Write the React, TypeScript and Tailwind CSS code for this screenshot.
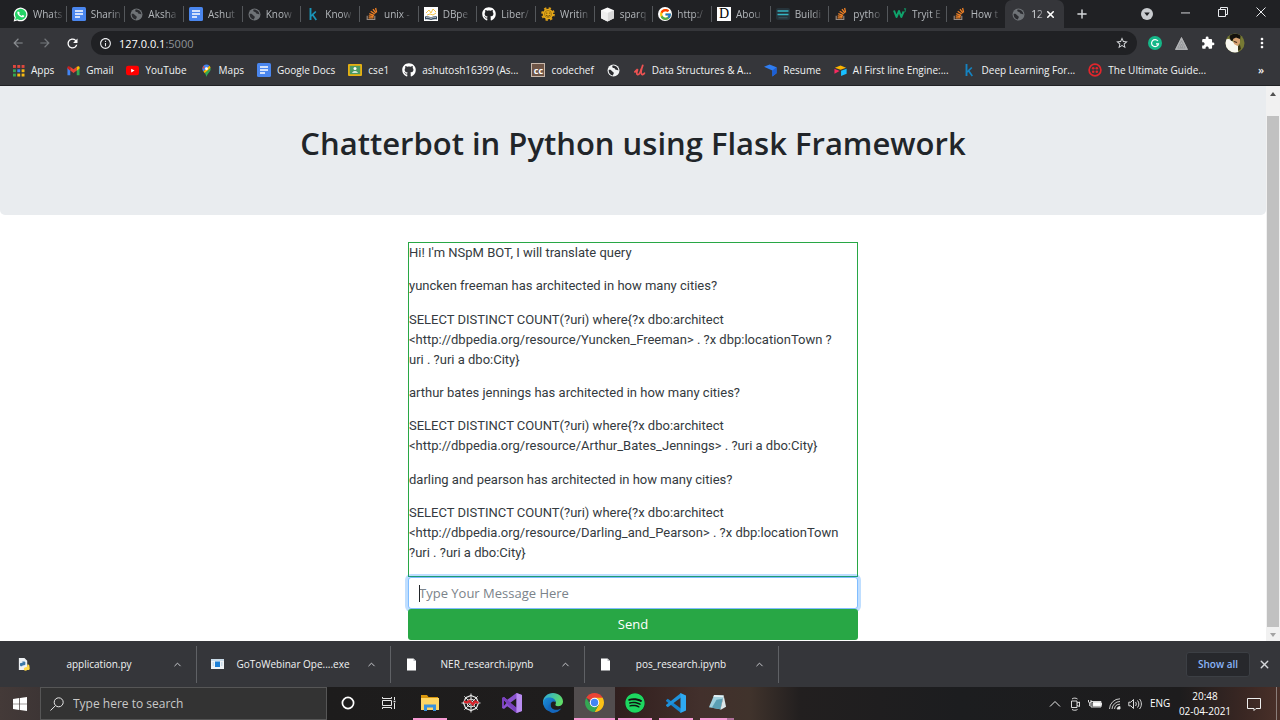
import React from 'react';
import {
  MdArrowBack,
  MdArrowForward,
  MdRefresh,
  MdInfoOutline,
  MdStarBorder,
  MdExtension,
  MdMoreVert,
} from 'react-icons/md';
import { FaGithub, FaSpotify } from 'react-icons/fa';
import { FcGoogle } from 'react-icons/fc';
import { ChevronUp, Plus, X } from 'lucide-react';

/* ---------- Site icons ---------- */

const WhatsApp = () => (
  <svg viewBox="0 0 24 24" className="size-[15px] shrink-0">
    <path d="M1 23l1.6-5.7A11 11 0 1 1 6.800 21.500z" fill="#fff" />
    <path d="M3.300 20.700l1.200-4.200A9 9 0 1 1 7.600 19.600z" fill="#25d366" />
    <path
      d="M8.300 6.800c-.3-.6-.5-.6-.9-.6-.8 0-1.700 1.100-1.700 2.500 0 1.600 1.200 3.100 1.300 3.300.2.200 2.300 3.600 5.700 4.900 2.800 1.100 3.400.9 4 .8.600 0 1.900-.8 2.200-1.500.3-.8.300-1.400.2-1.500-.1-.2-.3-.2-.6-.4l-2.100-1c-.3-.1-.5-.2-.8.2l-.9 1.200c-.2.200-.4.200-.7.100-.3-.2-1.400-.5-2.600-1.600-1-.9-1.600-1.900-1.800-2.200-.2-.3 0-.5.100-.7l.9-1c.1-.2.100-.4 0-.6z"
      fill="#fff"
      transform="translate(2.200 2) scale(.82)"
    />
  </svg>
);

const Docs = () => (
  <svg viewBox="0 0 14 14" className="size-[14px] shrink-0">
    <rect width="14" height="14" rx="1.500" fill="#4a86ee" />
    <path d="M3 4h8M3 7h8M3 10h5" stroke="#fff" strokeWidth="1.400" />
  </svg>
);

const Globe = ({ light = false }: { light?: boolean }) => (
  <svg viewBox="0 0 24 24" className="size-[13px] shrink-0">
    <circle cx="12" cy="12" r="11" fill={light ? '#f1f3f4' : '#6f7377'} />
    <path
      d="M3 11c3-1 5 .5 6.500 2.500 1 1.500 3 1 3 3.500 0 1.500-1.500 2-1.500 4C6 20.500 3 17 3 11zM10 3c-1 3 .5 4 3 4.500 2 .4 1 3 4 3 1.500 0 2.500 1 4 1.500C21 7 16 2.500 10 3z"
      fill="#2b2c30"
    />
  </svg>
);

const Kaggle = ({ color = '#1a94b8' }: { color?: string }) => (
  <svg viewBox="0 0 14 14" className="size-[14px] shrink-0" fill="none" stroke={color}>
    <path d="M4.500 1v12" strokeWidth="1.900" />
    <path d="M9.800 4.500L5 9.200M6.400 7.600L10.300 13" strokeWidth="1.700" />
  </svg>
);

const StackOverflow = () => (
  <svg viewBox="0 0 14 14" className="size-[14px] shrink-0" fill="none">
    <path d="M2.200 8.800v3.700h7.600V8.800" stroke="#9b8d84" strokeWidth="1.100" />
    <path
      d="M3.600 10.800h4.900M3.700 8.900l4.900.6M4.300 6.700l4.700 1.600M5.700 4.300l4.100 2.700M8 2.200l2.900 4M10.600 1l1 4.400"
      stroke="#f08125"
      strokeWidth="1.300"
    />
  </svg>
);

const DBpedia = () => (
  <svg viewBox="0 0 14 14" className="size-[14px] shrink-0">
    <rect width="14" height="14" fill="#fff" />
    <path d="M2 6l3-3 2 3 2-4 3 3M3 8l3-1 3 1 3-2" stroke="#f0bb35" strokeWidth=".9" fill="none" />
    <path d="M1 9.500c2-.6 4-.2 6 1 2-1.200 4-1.600 6-1v3c-2-.5-4-.2-6 .6-2-.8-4-1.100-6-.6z" fill="#34495e" />
    <path d="M2 10.500c2-.3 3.500 0 5 1 1.500-1 3-1.300 5-1" stroke="#fff" strokeWidth=".6" fill="none" />
  </svg>
);

const Github = () => <FaGithub className="size-[14px] shrink-0 text-white" />;

const Sun = () => (
  <svg viewBox="0 0 24 24" className="size-[14px] shrink-0">
    <circle cx="12" cy="12" r="10" fill="none" stroke="#dd9f17" strokeWidth="3.600" strokeDasharray="3.900 3.950" />
    <circle cx="12" cy="12" r="9" fill="#e9ac1a" />
    <circle cx="12" cy="12" r="6" fill="none" stroke="#8a630c" strokeWidth="1.200" />
    <path d="M8.500 10.500h2.500M13.500 10.500h2.500M8.500 13.500c2 3 5.500 3 7 0" stroke="#6b4b08" strokeWidth="1.600" fill="none" />
  </svg>
);

const Cube = () => (
  <svg viewBox="0 0 14 14" className="size-[15px] shrink-0">
    <path d="M7 .5l6 2.500v7.500L7 13.500l-6-3V3z" fill="#fafafa" />
    <path d="M7 5.500l6-2.500v7.500l-6 3z" fill="#d9d9d9" />
    <path d="M1 3l6 2.500v8l-6-3z" fill="#efefef" />
  </svg>
);

const Google = () => (
  <span className="flex size-[14px] shrink-0 items-center justify-center rounded-full bg-white">
    <FcGoogle className="size-[13px]" />
  </span>
);

const LetterD = () => (
  <span className="flex size-[14px] shrink-0 items-center justify-center bg-white font-['Liberation_Serif',serif] text-[14px] leading-none text-black">
    D
  </span>
);

const Bars = () => (
  <svg viewBox="0 0 14 14" className="size-[14px] shrink-0">
    <rect y="1" width="14" height="12" rx="2" fill="#26333a" />
    <path d="M1.500 4h11M1.500 7.500h11" stroke="#35b5c4" strokeWidth="1.500" />
    <path d="M2.500 10.800h9" stroke="#3c5961" />
  </svg>
);

const W3 = () => (
  <svg viewBox="0 0 14 14" className="size-[14px] shrink-0" fill="none" stroke="#0fa36b">
    <path d="M1 3.500l2.500 6.500 2.500-6 2.300 6 2.300-5.500" strokeWidth="2" strokeLinejoin="round" />
    <path d="M11 1.800h1.800l-1 1.300c1 .1 1.300 1.700-.6 1.700" strokeWidth=".9" />
  </svg>
);

const Apps = () => (
  <svg viewBox="0 0 13 13" className="size-[13px] shrink-0">
    {['#e0483e', '#e0483e', '#e0483e', '#34a853', '#4285f4', '#f5b912', '#34a853', '#f5b912', '#f5b912'].map(
      (c, i) => (
        <rect key={i} x={1 + (i % 3) * 4.3} y={1 + Math.floor(i / 3) * 4.3} width="2.900" height="2.900" fill={c} />
      ),
    )}
  </svg>
);

const Gmail = () => (
  <svg viewBox="0 0 14 14" className="size-[13px] shrink-0">
    <path d="M.5 4v8h3V6z" fill="#4285f4" />
    <path d="M13.500 4v8h-3V6z" fill="#34a853" />
    <path d="M3.500 3v4L7 9.600 10.500 7V3L7 5.600z" fill="#ea4335" />
    <path d="M.5 3.500v1.400l3 2.300V3C2 1.800.5 2.300.5 3.500z" fill="#c5221f" />
    <path d="M13.500 3.500v1.400l-3 2.300V3c1.500-1.200 3-.7 3 .5z" fill="#fbbc04" />
  </svg>
);

const YouTube = () => (
  <svg viewBox="0 0 14 14" className="size-[13px] shrink-0">
    <rect x="0" y="1.800" width="14" height="10.400" rx="2.400" fill="#f00" />
    <path d="M5.600 5v4.200L9.200 7.100z" fill="#fff" />
  </svg>
);

const Maps = () => (
  <svg viewBox="0 0 14 14" className="size-[13px] shrink-0">
    <path d="M7 .5a4.500 4.500 0 0 0-4.500 4.500c0 1.200.5 2.200 1.200 3.100L10.200 1.800A4.500 4.500 0 0 0 7 .5z" fill="#4285f4" />
    <path d="M3.600 2L2.700 6 5.200 3.500z" fill="#ea4335" />
    <path d="M10.200 1.800L3.700 8.100l1.500 1.900L11.400 4.200a4.500 4.500 0 0 0-1.200-2.400z" fill="#fbbc04" />
    <path d="M11.400 4.200L5.200 10c.9 1.200 1.300 2 1.500 3.200.1.400.5.400.6 0 .5-3.200 4.200-4.700 4.200-8.200z" fill="#34a853" />
    <circle cx="7" cy="5" r="1.600" fill="#fff" />
  </svg>
);

const Classroom = () => (
  <svg viewBox="0 0 14 14" className="size-[14px] shrink-0">
    <rect y="1" width="14" height="12" rx="1" fill="#e6b012" />
    <rect x="1.800" y="2.800" width="10.400" height="8.400" fill="#4c9a62" />
    <circle cx="7" cy="5.600" r="1.500" fill="#fff" />
    <path d="M4 9.800c.5-2.200 5.500-2.200 6 0z" fill="#fff" />
  </svg>
);

const CodeChef = () => (
  <span className="flex size-[14px] shrink-0 items-center justify-center border border-[#c9b8ab] bg-[#6f5546] text-[9px] leading-none font-bold text-white">
    cc
  </span>
);

const Udemy = () => (
  <svg viewBox="0 0 14 14" className="size-[13px] shrink-0" fill="none" stroke="#ec5252" strokeLinecap="round">
    <path d="M2 8.500L5 5.500c-1 3-1.600 5.500 0 6 1.600.3 3-2.500 4-6" strokeWidth="1.900" />
    <path d="M10.500 1.500c-1.500 4-2.500 8-1.200 9.500.8.800 2 .2 3-1" strokeWidth="1.900" />
  </svg>
);

const ResumeMark = () => (
  <svg viewBox="0 0 14 14" className="size-[13px] shrink-0">
    <path d="M0 3l6-2.500 7.500 3V10L9 13.500V7z" fill="#2f7df0" />
    <path d="M13.500 3.500V10L9 13.500V7z" fill="#1c5fd6" />
  </svg>
);

const Airtable = () => (
  <svg viewBox="0 0 14 14" className="size-[13px] shrink-0">
    <path d="M1 4l6-2.500L13 4 7 6.300z" fill="#fcb400" />
    <path d="M7.600 7.300l6-2.300v5.500l-6 2.300z" fill="#18bfff" />
    <path d="M.5 5l5.500 2.500L.5 10.500z" fill="#f82b60" />
  </svg>
);

const Twilio = () => (
  <svg viewBox="0 0 14 14" className="size-[14px] shrink-0">
    <circle cx="7" cy="7" r="5.900" fill="none" stroke="#e0262c" strokeWidth="1.700" />
    <g fill="#e0262c">
      <circle cx="5.200" cy="5.200" r="1.300" />
      <circle cx="8.800" cy="5.200" r="1.300" />
      <circle cx="5.200" cy="8.800" r="1.300" />
      <circle cx="8.800" cy="8.800" r="1.300" />
    </g>
  </svg>
);

/* ---------- Browser chrome ---------- */

const tabs: { label: string; icon: React.ReactNode }[] = [
  { label: 'Whats', icon: <WhatsApp /> },
  { label: 'Sharin', icon: <Docs /> },
  { label: 'Aksha', icon: <Globe /> },
  { label: 'Ashut', icon: <Docs /> },
  { label: 'Know', icon: <Globe /> },
  { label: 'Know', icon: <Kaggle /> },
  { label: 'unix -', icon: <StackOverflow /> },
  { label: 'DBpe', icon: <DBpedia /> },
  { label: 'Liber/', icon: <Github /> },
  { label: 'Writin', icon: <Sun /> },
  { label: 'sparq', icon: <Cube /> },
  { label: 'http:/', icon: <Google /> },
  { label: 'Abou', icon: <LetterD /> },
  { label: 'Buildi', icon: <Bars /> },
  { label: 'pytho', icon: <StackOverflow /> },
  { label: 'Tryit E', icon: <W3 /> },
  { label: 'How t', icon: <StackOverflow /> },
];

function TabStrip() {
  return (
    <div className="flex h-7 bg-[#202124] pl-2">
      <div className="grid flex-1 grid-cols-18" role="tablist">
        {tabs.map((t, i) => (
          <button
            key={i}
            role="tab"
            aria-selected={false}
            className="flex min-w-0 items-center justify-between pl-[5px] text-[10px] text-[#b4b8bc]"
          >
            <span className="flex items-center gap-[5px]">
              {t.icon}
              <span className="whitespace-nowrap [mask-image:linear-gradient(to_right,#000_65%,rgba(0,0,0,0.25))]">
                {t.label}
              </span>
            </span>
            <span className={i === 16 ? 'h-4 w-px' : 'h-4 w-px bg-[#54575b]'} />
          </button>
        ))}
        <div className="flex min-w-0 items-center justify-between rounded-t-[7px] bg-[#35363a] pr-2 pl-[7px]">
          <button
            role="tab"
            aria-selected={true}
            className="flex items-center gap-[6px] text-[10px] text-[#dfe1e5]"
          >
            <Globe />
            <span className="[mask-image:linear-gradient(to_right,#000_50%,rgba(0,0,0,0.4))]">12</span>
          </button>
          <button aria-label="Close tab" className="text-white">
            <X className="size-[11px]" strokeWidth={3.5} />
          </button>
        </div>
      </div>
      <div className="flex w-[216px] items-center">
        <button aria-label="New tab" className="pl-[11px] text-[#d5d7da]">
          <Plus className="size-[14px]" strokeWidth={2.5} />
        </button>
        <div className="ml-auto flex items-center text-[#e8eaed]">
          <button aria-label="Search tabs" className="flex w-[38px] justify-center">
            <svg viewBox="0 0 12 12" className="size-3">
              <circle cx="6" cy="6" r="6" fill="#c9ccd0" />
              <path d="M3.200 4.600h5.600L6 8z" fill="#202124" />
            </svg>
          </button>
          <button aria-label="Minimize" className="-mt-1 flex w-[38px] justify-center">
            <svg viewBox="0 0 10 10" className="size-[9px]">
              <path d="M0 5.500h10" stroke="currentColor" />
            </svg>
          </button>
          <button aria-label="Restore" className="-mt-1 flex w-[38px] justify-center">
            <svg viewBox="0 0 10 10" className="size-[10px]" fill="none" stroke="currentColor">
              <path d="M.5 2.500h7v7h-7zM2.500 2.500v-2h7v7h-2" />
            </svg>
          </button>
          <button aria-label="Close window" className="-mt-1 flex w-[38px] justify-center">
            <svg viewBox="0 0 10 10" className="size-[10px]" stroke="currentColor">
              <path d="M.5 .5l9 9M9.500 .5l-9 9" />
            </svg>
          </button>
        </div>
      </div>
    </div>
  );
}

function Toolbar() {
  return (
    <div className="flex h-[30px] items-center px-[11px]">
      <div className="flex items-center gap-[13px] pr-[11px]">
        <button aria-label="Back" className="text-[#8a8d91]">
          <MdArrowBack className="size-[14px]" />
        </button>
        <button aria-label="Forward" className="text-[#75787c]">
          <MdArrowForward className="size-[14px]" />
        </button>
        <button aria-label="Reload" className="text-white">
          <MdRefresh className="size-[15px]" />
        </button>
      </div>
      <div className="flex h-6 flex-1 items-center gap-[7px] rounded-full bg-[#202124] px-2">
        <MdInfoOutline className="size-[13px] shrink-0 text-[#e8eaed]" />
        <a href="#address" className="text-[11px] leading-none text-white">
          127.0.0.1<span className="text-[#8f9398]">:5000</span>
        </a>
        <button aria-label="Bookmark this page" className="ml-auto text-[#d5d7da]">
          <MdStarBorder className="size-[14px]" />
        </button>
      </div>
      <div className="flex items-center gap-[13px] pl-[11px]">
        <button aria-label="Grammarly">
          <svg viewBox="0 0 14 14" className="size-[14px]">
            <circle cx="7" cy="7" r="7" fill="#15b788" />
            <path d="M9.900 5A3.500 3.500 0 1 0 10.500 7.800H8" fill="none" stroke="#fff" strokeWidth="1.200" />
          </svg>
        </button>
        <button aria-label="Extension">
          <svg viewBox="0 0 14 14" className="size-[13px]">
            <path d="M7 .5l6.500 13H.5z" fill="#b4b6b8" stroke="#b4b6b8" strokeLinejoin="round" />
            <path d="M7 4l4 8H3zM7 7.500l1.600 3.500H5.400z" fill="none" stroke="#808285" strokeWidth=".6" />
          </svg>
        </button>
        <button aria-label="Extensions" className="text-white">
          <MdExtension className="size-[14px]" />
        </button>
        <button aria-label="Profile" className="-mx-[3px]">
          <svg viewBox="0 0 20 20" className="size-5">
            <clipPath id="avatar">
              <circle cx="10" cy="10" r="9.500" />
            </clipPath>
            <g clipPath="url(#avatar)">
              <rect width="20" height="20" fill="#777a34" />
              <path d="M0 7c3-2 6-1 8 2l6 4-1 7H0z" fill="#f8f7f0" />
              <path d="M4.500 4C5 0 14 0 15.500 3l-.5 5-3-2-3 1-3 1z" fill="#14110d" />
              <path d="M8 6l3-1.500 4 1.500v4l-2.500 3L9 11z" fill="#d8a272" />
              <path d="M9 8.500l3 1" stroke="#3d2619" strokeWidth="1.100" />
              <path d="M13 13l2-1 1 4-3 2z" fill="#3a3418" />
            </g>
          </svg>
        </button>
        <button aria-label="Menu" className="-mx-px text-white">
          <MdMoreVert className="size-[16px]" />
        </button>
      </div>
    </div>
  );
}

const bookmarks: { label: string; icon: React.ReactNode }[] = [
  { label: 'Apps', icon: <Apps /> },
  { label: 'Gmail', icon: <Gmail /> },
  { label: 'YouTube', icon: <YouTube /> },
  { label: 'Maps', icon: <Maps /> },
  { label: 'Google Docs', icon: <Docs /> },
  { label: 'cse1', icon: <Classroom /> },
  { label: 'ashutosh16399 (As...', icon: <Github /> },
  { label: 'codechef', icon: <CodeChef /> },
  { label: '', icon: <Globe light /> },
  { label: 'Data Structures & A...', icon: <Udemy /> },
  { label: 'Resume', icon: <ResumeMark /> },
  { label: 'AI First line Engine:...', icon: <Airtable /> },
  { label: 'Deep Learning For...', icon: <Kaggle color="#1583c0" /> },
  { label: 'The Ultimate Guide...', icon: <Twilio /> },
];

function BookmarkBar() {
  return (
    <nav className="flex h-7 items-center gap-[13px] border-b border-[#202124] pr-4 pb-[3px] pl-3 text-[10px] whitespace-nowrap text-[#f1f3f4]">
      {bookmarks.map((b, i) => (
        <a key={i} href="#bookmark" aria-label={b.label || 'Bookmark'} className="flex items-center gap-[6px]">
          {b.icon}
          {b.label && <span>{b.label}</span>}
        </a>
      ))}
      <button aria-label="More bookmarks" className="ml-auto text-[11px] font-semibold">
        »
      </button>
    </nav>
  );
}

/* ---------- Page ---------- */

const messages: string[][] = [
  ["Hi! I'm NSpM BOT, I will translate query"],
  ['yuncken freeman has architected in how many cities?'],
  [
    'SELECT DISTINCT COUNT(?uri) where{?x dbo:architect',
    '<http://dbpedia.org/resource/Yuncken_Freeman> . ?x dbp:locationTown ?',
    'uri . ?uri a dbo:City}',
  ],
  ['arthur bates jennings has architected in how many cities?'],
  [
    'SELECT DISTINCT COUNT(?uri) where{?x dbo:architect',
    '<http://dbpedia.org/resource/Arthur_Bates_Jennings> . ?uri a dbo:City}',
  ],
  ['darling and pearson has architected in how many cities?'],
  [
    'SELECT DISTINCT COUNT(?uri) where{?x dbo:architect',
    '<http://dbpedia.org/resource/Darling_and_Pearson> . ?x dbp:locationTown',
    '?uri . ?uri a dbo:City}',
  ],
];

function ChatPage() {
  return (
    <div className="flex flex-1 bg-white">
      <main className="flex flex-1 flex-col items-center pb-px text-[#212529]">
        <header className="mb-[27px] flex w-full justify-center rounded-b-[5px] bg-[#e9ecef] pt-[37px] pb-[52px]">
          <h1 className="text-[31px] leading-10 font-semibold">Chatterbot in Python using Flask Framework</h1>
        </header>
        <section className="w-[450px] text-[13px]">
          <div className="flex min-h-[335px] flex-col justify-between border border-[#28a745] pb-[13px] font-['Roboto',sans-serif] leading-5 whitespace-pre">
            {messages.map((m, i) => (
              <p key={i} className="text-[#343a40]">
                {m.join('\n')}
              </p>
            ))}
          </div>
          <form onSubmit={(e) => e.preventDefault()}>
            <div className="relative">
              <input
                type="text"
                aria-label="Message"
                placeholder="Type Your Message Here"
                className="block h-8 w-full rounded-[3px] border border-[#80bdff] bg-white px-[10px] shadow-[0_0_0_3px_rgba(0,123,255,0.25)] outline-none placeholder:text-[#7b838a]"
              />
              <span className="absolute top-2 left-[11px] h-[17px] w-px bg-[#212529]" />
            </div>
            <button type="submit" className="relative block h-[31px] w-full rounded-[3px] bg-[#28a745] text-white">
              Send
            </button>
          </form>
        </section>
      </main>
      <div className="flex w-[14px] flex-col items-center gap-5 bg-[#f1f1f1] pt-[6px] pb-[4px]">
        <svg viewBox="0 0 6 4" className="h-1 w-[6px]">
          <path d="M3 0l3 4H0z" fill="#505050" />
        </svg>
        <div className="w-3 flex-1 bg-[#c1c1c1]" />
        <svg viewBox="0 0 6 4" className="-mt-[14px] h-1 w-[6px]">
          <path d="M3 4L0 0h6z" fill="#a3a3a3" />
        </svg>
      </div>
    </div>
  );
}

/* ---------- Downloads ---------- */

const PythonFile = () => (
  <svg viewBox="0 0 14 14" className="size-[13px] shrink-0">
    <path d="M2 0h6l3 3v10H2z" fill="#eef1f4" />
    <path d="M5 4.500c0-1 4-1.200 4 0V7c0 1-3.500.5-3.500 2H4c-1.200-.5-1-3.500 0-3.500h3" fill="#3b77a8" />
    <path d="M13 9.500C14 9.500 14 13 12.500 13H11c-1 1.200-3 1-3.500 0v-2c0-1.500 3.500-.5 3.500-2.500V7c2 0 2.500.5 2.500 2.500z" fill="#ffd94b" />
  </svg>
);

const ExeFile = () => (
  <svg viewBox="0 0 13 10" className="h-[10px] w-[13px] shrink-0">
    <rect width="13" height="10" fill="#eef2f5" />
    <rect x="4" y="2.500" width="5" height="5.500" fill="#1c7fd6" />
    <path d="M0 1h13M1.500 4h1.500M1.500 6h1.500M10 4h1.500M10 6h1.500" stroke="#8fb8d6" strokeWidth=".8" />
  </svg>
);

const BlankFile = () => (
  <svg viewBox="0 0 10 13" className="h-[13px] w-[13px] shrink-0">
    <path d="M.5 .5h6.500l2.500 2.500v9.500h-9z" fill="#fff" />
    <path d="M7 .5V3h2.500z" fill="#b9bcc0" />
  </svg>
);

const downloads = [
  { name: 'application.py', icon: <PythonFile /> },
  { name: 'GoToWebinar Ope....exe', icon: <ExeFile /> },
  { name: 'NER_research.ipynb', icon: <BlankFile /> },
  { name: 'pos_research.ipynb', icon: <BlankFile /> },
];

function DownloadShelf() {
  return (
    <div className="flex h-[46px] items-center bg-[#35363a] pr-[9px] pl-[3px]">
      {downloads.map((d) => (
        <div key={d.name} className="flex h-[37px] w-[194px] items-center border-r border-[#5f6165] pr-[13px] pl-[14px]">
          {d.icon}
          <a href="#download" className="flex-1 pr-1 text-center text-[10px] font-medium whitespace-nowrap text-[#f1f3f4]">
            {d.name}
          </a>
          <button aria-label={'Options for ' + d.name} className="text-[#d5d7da]">
            <ChevronUp className="size-[11px]" />
          </button>
        </div>
      ))}
      <button className="ml-auto h-[25px] w-16 rounded-[3px] border border-[#3c3f44] bg-[#27282c] text-[10px] font-semibold text-[#8ab4f8]">
        Show all
      </button>
      <button aria-label="Close downloads" className="ml-2 text-[#d5d7da]">
        <X className="size-[13px]" strokeWidth={2.5} />
      </button>
    </div>
  );
}

/* ---------- Taskbar ---------- */

const Cortana = () => (
  <svg viewBox="0 0 14 14" className="size-[14px]">
    <circle cx="7" cy="7" r="5.600" fill="none" stroke="#fff" strokeWidth="1.700" />
  </svg>
);

const TaskView = () => (
  <svg viewBox="0 0 14 14" className="size-[14px]" fill="none" stroke="#e6e6e6">
    <path d="M.5 4.500h9v5h-9zM.5 1v1.500h9V1M.5 13v-1.500h9V13M12.500 1v3M12.500 7v6" />
    <path d="M11.500 5.500h2" strokeWidth="1.500" />
  </svg>
);

const Explorer = () => (
  <svg viewBox="0 0 20 18" className="h-[18px] w-5">
    <path d="M1 1h6l1.500 2H18v3H1z" fill="#d9970d" />
    <path d="M1 4h18v12H1z" fill="#ffd765" />
    <path d="M4 17v-6.500h12V17h-3v-3.500H7V17z" fill="#3a92dc" />
  </svg>
);

const Spyder = () => (
  <svg viewBox="0 0 20 20" className="size-5" fill="none">
    <path d="M10 .5v19M.5 10h19M3.300 3.300l13.400 13.400M16.700 3.300L3.300 16.700" stroke="#dcdcdc" strokeWidth="1" />
    <path d="M10 2.500l5.300 2.200 2.200 5.300-2.200 5.300L10 17.500l-5.300-2.200L2.500 10l2.200-5.300z" stroke="#e8e8e8" strokeWidth="1.200" />
    <path d="M10 6l3 1.200L14 10l-1 3-3 1-3-1-1-3 1-2.800z" stroke="#e8e8e8" />
    <path d="M3 8.500l3 1 2.500-1.500 3.500 3.500 2-3 3.500 1.500" stroke="#d8232a" strokeWidth="2.300" />
  </svg>
);

const VisualStudio = () => (
  <svg viewBox="0 0 20 20" className="size-5">
    <path d="M0 5l2-.9 3.200 2.700L14.500 0 20 2v16l-5.500 2-9.300-6.800L2 15.900 0 15zM2 7.300v5.400L4.500 10zM8 10l6.500 4.800V5.200z" fill="#8b52d0" fillRule="evenodd" />
    <path d="M0 5l2-.9L14.500 14.800V20L2 7.300V12.700L0 15z" fill="#7a41bd" />
    <path d="M14.500 0L20 2v16l-5.500 2z" fill="#b98cf0" />
  </svg>
);

const Edge = () => (
  <svg viewBox="0 0 20 20" className="size-5">
    <defs>
      <linearGradient id="edge-top" x1="0" y1="0" x2="1" y2=".4">
        <stop offset="0" stopColor="#2ba7e2" />
        <stop offset="1" stopColor="#5fdc6a" />
      </linearGradient>
      <linearGradient id="edge-low" x1="0" y1="0" x2="1" y2="1">
        <stop offset="0" stopColor="#1b90dc" />
        <stop offset="1" stopColor="#0d4fa6" />
      </linearGradient>
    </defs>
    <path d="M0 9C0 4 4.500 0 10 0s10 4 10 8.500c0 3-2.200 4.700-4.800 4.700-2.400 0-3.500-1-2.500-2.200C13.500 9 12 6 8.500 6S1.500 8.500.2 12z" fill="url(#edge-top)" />
    <path d="M0 10c.3-4 3.500-6 7.500-5.500 3 .3 5 2.400 5.200 4.500C10 7.500 7.500 9 7.500 12c0 3.500 3.800 6.500 7.500 5.800A10 10 0 0 1 0 10z" fill="url(#edge-low)" />
    <path d="M7.500 12c0 4 5 6.500 10.700 3.600-1.700 2.700-4.700 4.400-8.200 4.400-3 0-5-3.500-4.500-6 .3-2 1.500-3.500 3.500-4.500-1 .5-1.500 1.500-1.500 2.500z" fill="#1467bd" />
  </svg>
);

const Chrome = () => (
  <svg viewBox="0 0 20 20" className="size-[19px]">
    <path d="M10 10L1.340 5A10 10 0 0 1 18.660 5z" fill="#ea4335" />
    <path d="M10 5h8.660A10 10 0 0 1 10 20l4.330-7.500z" fill="#fbc116" />
    <path d="M5.670 12.500L1.340 5A10 10 0 0 0 10 20l4.330-7.500z" fill="#34a853" />
    <circle cx="10" cy="10" r="5" fill="#fff" />
    <circle cx="10" cy="10" r="3.900" fill="#4285f4" />
  </svg>
);

const Spotify = () => (
  <span className="rounded-full bg-[#121212]">
    <FaSpotify className="size-5 text-[#1ed760]" />
  </span>
);

const VSCode = () => (
  <svg viewBox="0 0 20 20" className="size-5">
    <path d="M0 7.200l1.800-1.500L15 15.500V20L.2 8.300z" fill="#1784cf" />
    <path d="M0 12.800l1.800 1.500L15 4.500V0L.2 11.700z" fill="#1f93dd" />
    <path d="M14.500 0L20 2.500v15L14.500 20z" fill="#2eaaf2" />
  </svg>
);

const Notepad = () => (
  <svg viewBox="0 0 20 20" className="size-[19px]">
    <path d="M6.500 2l10 .5-3.500 14.500L1 15z" fill="#9fd0de" />
    <path d="M9 7l6.500-1-2.500 11-9-1.500z" fill="#5a9fb4" />
    <path d="M6.500 2l10 .5-.5 2L5.500 4z" fill="#e5f1f5" />
    <path d="M16.500 2.500L19 14.500 13 18z" fill="#dce7ea" />
  </svg>
);

const apps = [
  { name: 'Cortana', icon: <Cortana />, cell: '', bar: '' },
  { name: 'Task View', icon: <TaskView />, cell: '', bar: '' },
  { name: 'File Explorer', icon: <Explorer />, cell: '', bar: 'w-[34px] bg-[#f79ad3]' },
  { name: 'Spyder', icon: <Spyder />, cell: '', bar: '' },
  { name: 'Visual Studio', icon: <VisualStudio />, cell: '', bar: '' },
  { name: 'Edge', icon: <Edge />, cell: '', bar: '' },
  { name: 'Chrome', icon: <Chrome />, cell: 'bg-[#524d4e]', bar: 'w-full bg-[#f79ad3]' },
  { name: 'Spotify', icon: <Spotify />, cell: '', bar: 'w-[34px] bg-[#f79ad3]' },
  { name: 'Visual Studio Code', icon: <VSCode />, cell: '', bar: 'w-[34px] bg-[#f79ad3]' },
  {
    name: 'Notepad',
    icon: <Notepad />,
    cell: '',
    bar: 'w-[34px] bg-[linear-gradient(to_right,#f79ad3_27px,#b0709a_27px)]',
  },
];

function Taskbar() {
  return (
    <div className="flex h-[33px] bg-[linear-gradient(to_right,#443a38_0px,#3d3535_40px,#1d1c1c_326px,#1f1d1d_570px,#33201f_625px,#42302c_700px,#40332c_750px,#221f1f_800px,#1c1d1f_960px,#1d1c1d_1180px,#3a2723_1245px,#4a3029_1280px)] text-white">
      <button aria-label="Start" className="flex w-10 items-center justify-center">
        <svg viewBox="0 0 14 14" className="size-[14px]" fill="#fff">
          <path d="M0 2l6.300-.9v5.600H0zM7 1l7-1v6.700H7zM0 7.300h6.300v5.600L0 12zM7 7.300h7V14l-7-1z" />
        </svg>
      </button>
      <label className="flex w-[287px] items-center gap-[9px] border border-[#565656] bg-[#333] pl-[9px]">
        <svg viewBox="0 0 14 14" className="size-[14px] shrink-0" fill="none" stroke="#e6e6e6">
          <circle cx="8.700" cy="5.300" r="4.500" />
          <path d="M5.500 8.600L.5 13.500" />
        </svg>
        <input
          type="text"
          aria-label="Type here to search"
          placeholder="Type here to search"
          className="w-full bg-transparent text-[12px] outline-none placeholder:text-[#c9c9c9]"
        />
      </label>
      <div className="grid w-[411px] grid-cols-10">
        {apps.map((a) => (
          <button key={a.name} aria-label={a.name} className={'flex flex-col items-center ' + a.cell}>
            <span className="flex flex-1 items-center">{a.icon}</span>
            <span className={'h-[2px] ' + a.bar} />
          </button>
        ))}
      </div>
      <div className="ml-auto flex items-center pr-[3px]">
        <div className="flex items-center gap-[6px] pr-1">
          <button aria-label="Show hidden icons">
            <svg viewBox="0 0 14 14" className="size-[14px]" fill="none" stroke="#eee">
              <path d="M2 9.500l5-5 5 5" />
            </svg>
          </button>
          <svg viewBox="0 0 14 14" className="size-[14px]" fill="none" stroke="#eee" strokeWidth=".9">
            <path d="M3.500 4h5.500v6.500H3.500zM9 6l2.500-1v4.500L9 8.500M4 2c1.500-1.200 4-1.200 5.500 0M4 12.500c1.500 1 4 1 5.500 0" />
          </svg>
          <svg viewBox="0 0 14 14" className="size-[14px]" fill="none" stroke="#eee" strokeWidth=".9">
            <path d="M3 4.500h10v5.500H3zM13.500 6v2.500" />
            <path d="M5 5.500h7.500v3.500H5z" fill="#fff" />
            <path d="M.5 3v2c0 1 2.500 1 2.500 0V3M1.700 6v3" />
          </svg>
          <svg viewBox="0 0 14 14" className="size-[14px]" fill="none" stroke="#ddd" strokeWidth=".9">
            <path d="M1.500 12A10.500 10.500 0 0 1 12 1.800M4 12a8 8 0 0 1 8-7.500M6.500 12A5.500 5.500 0 0 1 12 7.200" />
            <path d="M9 12a3 3 0 0 1 3-2.500V12z" fill="#fff" />
          </svg>
          <svg viewBox="0 0 14 14" className="size-[14px]" fill="none" stroke="#eee" strokeWidth=".9">
            <path d="M.8 5.200h2L5.500 2.500v9L2.800 8.800h-2zM7.500 5c1 1.200 1 2.800 0 4M9.500 3.500c1.800 2 1.800 5 0 7M11.500 2c2.500 3 2.500 7 0 10" />
          </svg>
          <span className="w-[26px] pl-[2px] text-[10px]">ENG</span>
        </div>
        <div className="w-[54px] text-center text-[10px] leading-[15px] whitespace-nowrap">
          <div>20:48</div>
          <div>02-04-2021</div>
        </div>
        <button aria-label="Notifications" className="flex w-11 justify-center">
          <svg viewBox="0 0 14 14" className="size-[14px]" fill="none" stroke="#eee">
            <path d="M.5 1.500h13v10H9l-2 2v-2H.5z" />
          </svg>
        </button>
        <span className="h-[33px] w-px bg-[#8a7d79]" />
      </div>
    </div>
  );
}

export default function App() {
  return (
    <div className="flex min-h-screen flex-col bg-[#35363a] font-['Open_Sans','Noto_Sans',sans-serif]">
      <TabStrip />
      <Toolbar />
      <BookmarkBar />
      <ChatPage />
      <DownloadShelf />
      <Taskbar />
    </div>
  );
}
